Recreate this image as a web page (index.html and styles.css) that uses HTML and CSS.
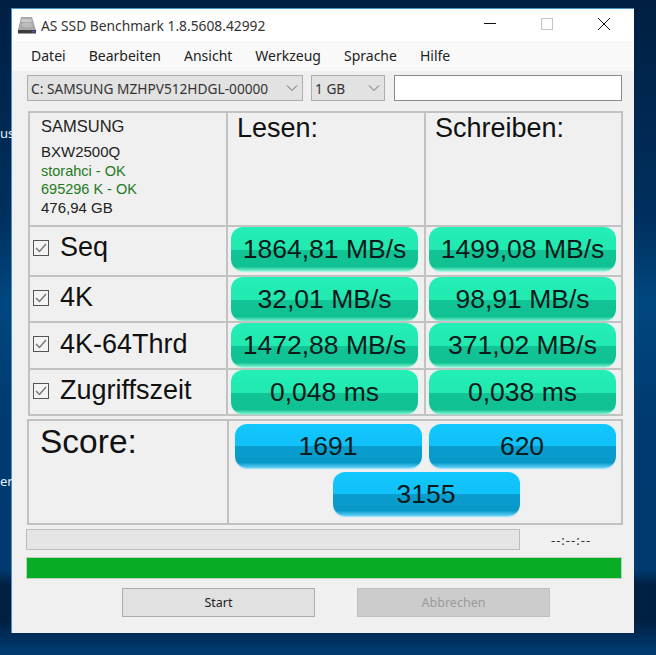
FILE: index.html
```html
<!DOCTYPE html>
<html lang="de">
<head>
  <meta charset="UTF-8">
  <title>AS SSD Benchmark</title>
  <link rel="stylesheet" href="styles.css">
</head>
<body>
  <div class="desktop">
    <span class="desk-label label-top">us</span>
    <span class="desk-label label-bottom">er</span>

    <div class="window">
      <div class="titlebar">
        <svg class="app-icon" width="20" height="18" viewBox="0 0 20 18">
          <path d="M4 1h11l4 13H1z" fill="#a9a9a9"/>
          <path d="M5 3h9l1 3H4z" fill="#c9c9c9"/>
          <ellipse cx="10" cy="9" rx="5" ry="2.5" fill="#bdbdbd"/>
          <rect x="1" y="14" width="18" height="3.5" fill="#3c3c3c"/>
          <rect x="15" y="15" width="3" height="1.5" fill="#5a4fc0"/>
        </svg>
        <span class="app-title">AS SSD Benchmark 1.8.5608.42992</span>
        <div class="win-controls">
          <svg width="14" height="14" viewBox="0 0 14 14"><path d="M1 6.5h12" stroke="#111" stroke-width="1" fill="none"/></svg>
          <svg width="14" height="14" viewBox="0 0 14 14"><rect x="1.5" y="1.5" width="11" height="11" stroke="#c4c4c4" fill="none"/></svg>
          <svg width="14" height="14" viewBox="0 0 14 14"><path d="M1 1l12 12M13 1L1 13" stroke="#111" stroke-width="1" fill="none"/></svg>
        </div>
      </div>

      <div class="menubar">
        <span>Datei</span>
        <span>Bearbeiten</span>
        <span>Ansicht</span>
        <span>Werkzeug</span>
        <span>Sprache</span>
        <span>Hilfe</span>
      </div>

      <div class="content">
        <div class="toolbar">
          <div class="combo combo-drive">
            <span>C: SAMSUNG MZHPV512HDGL-00000</span>
            <svg width="12" height="8" viewBox="0 0 12 8"><path d="M1 1.5l5 5 5-5" stroke="#666" fill="none"/></svg>
          </div>
          <div class="combo combo-size">
            <span>1 GB</span>
            <svg width="12" height="8" viewBox="0 0 12 8"><path d="M1 1.5l5 5 5-5" stroke="#666" fill="none"/></svg>
          </div>
          <div class="textbox"></div>
        </div>

        <div class="results">
          <div class="cell info">
            <div class="info-vendor">SAMSUNG</div>
            <div class="info-line info-fw">BXW2500Q</div>
            <div class="info-line ok">storahci - OK</div>
            <div class="info-line ok">695296 K - OK</div>
            <div class="info-line">476,94 GB</div>
          </div>
          <div class="cell heading">Lesen:</div>
          <div class="cell heading">Schreiben:</div>

          <div class="cell test test-seq">
            <svg class="check" width="16" height="16" viewBox="0 0 16 16"><rect x="0.5" y="0.5" width="15" height="15" fill="#f4f4f4" stroke="#555"/><path d="M3 8l3.5 3.5L13 4" stroke="#777" stroke-width="1.5" fill="none"/></svg>
            <span>Seq</span>
          </div>
          <div class="cell value-cell"><div class="pill green">1864,81 MB/s</div></div>
          <div class="cell value-cell"><div class="pill green">1499,08 MB/s</div></div>

          <div class="cell test">
            <svg class="check" width="16" height="16" viewBox="0 0 16 16"><rect x="0.5" y="0.5" width="15" height="15" fill="#f4f4f4" stroke="#555"/><path d="M3 8l3.5 3.5L13 4" stroke="#777" stroke-width="1.5" fill="none"/></svg>
            <span>4K</span>
          </div>
          <div class="cell value-cell"><div class="pill green">32,01 MB/s</div></div>
          <div class="cell value-cell"><div class="pill green">98,91 MB/s</div></div>

          <div class="cell test">
            <svg class="check" width="16" height="16" viewBox="0 0 16 16"><rect x="0.5" y="0.5" width="15" height="15" fill="#f4f4f4" stroke="#555"/><path d="M3 8l3.5 3.5L13 4" stroke="#777" stroke-width="1.5" fill="none"/></svg>
            <span>4K-64Thrd</span>
          </div>
          <div class="cell value-cell"><div class="pill green">1472,88 MB/s</div></div>
          <div class="cell value-cell"><div class="pill green">371,02 MB/s</div></div>

          <div class="cell test">
            <svg class="check" width="16" height="16" viewBox="0 0 16 16"><rect x="0.5" y="0.5" width="15" height="15" fill="#f4f4f4" stroke="#555"/><path d="M3 8l3.5 3.5L13 4" stroke="#777" stroke-width="1.5" fill="none"/></svg>
            <span>Zugriffszeit</span>
          </div>
          <div class="cell value-cell"><div class="pill green">0,048 ms</div></div>
          <div class="cell value-cell"><div class="pill green">0,038 ms</div></div>
        </div>

        <div class="score">
          <div class="score-label">Score:</div>
          <div class="score-values">
            <div class="pill blue">1691</div>
            <div class="pill blue">620</div>
            <div class="pill blue pill-total">3155</div>
          </div>
        </div>

        <div class="progress-row">
          <div class="progress-empty"></div>
          <span class="time">--:--:--</span>
        </div>
        <div class="progress-full"></div>

        <div class="actions">
          <div class="btn">Start</div>
          <div class="btn btn-disabled">Abbrechen</div>
        </div>
      </div>
    </div>
  </div>
</body>
</html>
```

FILE: styles.css
```css
* {
  box-sizing: border-box;
}

html,
body {
  margin: 0;
  height: 100%;
}

body {
  overflow: hidden;
  font-family: "Liberation Sans", Arial, sans-serif;
}

.desktop {
  position: relative;
  width: 656px;
  height: 655px;
  padding: 8px 22px 0 11px;
  background:
    linear-gradient(180deg, transparent 0, transparent 570px, rgba(0, 10, 30, 0.55) 585px, rgba(0, 10, 30, 0.55) 620px, transparent 650px),
    linear-gradient(180deg, #001f42 0, #00305f 220px, #00477f 300px, #003a70 420px, #003a6e 100%);
}

.desk-label {
  position: absolute;
  left: 0;
  color: #e8eef4;
  font-size: 13px;
  font-family: "Noto Sans", sans-serif;
}

.label-top {
  top: 124px;
}

.label-bottom {
  top: 472px;
}

.window {
  width: 623px;
  height: 625px;
  background: #f0f0f0;
  border-top: 1px solid #4a90c4;
  border-left: 1px solid #4a90c4;
  display: flex;
  flex-direction: column;
}

/* title bar */
.titlebar {
  height: 32px;
  flex: none;
  background: #fff;
  display: flex;
  align-items: center;
  padding-left: 5px;
  color: #333;
}

.app-icon {
  flex: none;
}

.app-title {
  margin-left: 4px;
  font-family: "Noto Sans", sans-serif;
  font-size: 13.8px;
}

.win-controls {
  margin-left: auto;
  display: flex;
  gap: 43px;
  padding-right: 23px;
  margin-top: -2px;
}

/* menu */
.menubar {
  height: 30px;
  flex: none;
  background: #f9f9f9;
  display: flex;
  align-items: center;
  gap: 23px;
  padding: 0 0 2px 19px;
  font-family: "Noto Sans", sans-serif;
  font-size: 14px;
  color: #222;
}

.content {
  padding: 4px 11px 0 14px;
  flex: 1;
}

.toolbar {
  display: flex;
  height: 26px;
  margin-left: 1px;
}

.combo {
  display: flex;
  align-items: center;
  justify-content: space-between;
  background: #e2e2e2;
  border: 1px solid #adadad;
  padding: 0 4px 0 3px;
  font-family: "Noto Sans", sans-serif;
  font-size: 13.7px;
  color: #333;
}

.combo-drive {
  width: 276px;
  margin-right: 8px;
}

.combo-size {
  width: 74px;
  margin-right: 9px;
}

.textbox {
  width: 228px;
  background: #fff;
  border: 1px solid #8a8a8a;
}

/* result table */
.results {
  margin: 10px 0 0 2px;
  display: grid;
  grid-template-columns: 198px 198px 198px;
  grid-template-rows: 114px 50px 46px 47px 46px;
  border-right: 2px solid #c2c2c2;
  border-bottom: 2px solid #c2c2c2;
  width: 595px;
}

.cell {
  border-top: 2px solid #c2c2c2;
  border-left: 2px solid #c2c2c2;
}

.info {
  padding: 2px 0 0 11px;
  color: #222;
  font-size: 15px;
}

.info-vendor {
  font-size: 16.5px;
  line-height: 22px;
}

.info-fw {
  margin-top: 6px;
}

.info-line {
  line-height: 18.7px;
}

.ok {
  color: #1f7a1f;
  font-size: 14.5px;
}

.heading {
  padding: 0 0 0 9px;
  font-size: 27px;
  line-height: 30px;
  color: #111;
}

.test {
  display: flex;
  align-items: center;
  padding: 0 0 3px 3px;
  font-size: 27px;
  color: #111;
}

.test-seq {
  padding-bottom: 7px;
}

.check {
  flex: none;
  margin-right: 11px;
}

.value-cell {
  padding: 0 5px 0 3px;
}

.pill {
  height: 44px;
  width: 187px;
  border-radius: 12px;
  display: flex;
  align-items: center;
  justify-content: center;
  font-size: 26.5px;
  color: #0a1a1a;
  flex: none;
}

.green {
  background: linear-gradient(180deg, #22efb6 0, #22e9b0 52%, #12c596 52%, #10c192 90%, #7df3d2 100%);
  box-shadow: 0 1px 1px rgba(125, 243, 210, 0.6);
}

.blue {
  background: linear-gradient(180deg, #10c8ff 0, #12c0f8 50%, #089ecf 50%, #0898c8 88%, #62d4fa 100%);
  box-shadow: 0 1px 1px rgba(98, 212, 250, 0.6);
}

.pill-total {
  margin-left: 2px;
}

/* score box */
.score {
  margin: 3px 0 0 1px;
  display: grid;
  grid-template-columns: 200px 1fr;
  width: 596px;
  height: 106px;
  border: 2px solid #c2c2c2;
}

.score-label {
  padding: 2px 0 0 11px;
  font-size: 33.5px;
  line-height: 38px;
  color: #111;
  border-right: 2px solid #c2c2c2;
}

.score-values {
  display: flex;
  flex-wrap: wrap;
  justify-content: center;
  align-content: flex-start;
  gap: 4px 7px;
  padding: 3px 4px 0 4px;
}

/* bottom bars */
.progress-row {
  display: flex;
  align-items: center;
  margin-top: 4px;
}

.progress-empty {
  width: 494px;
  height: 21px;
  background: #e5e5e5;
  border: 1px solid #bcbcbc;
}

.time {
  margin-left: 31px;
  font-family: "Noto Sans", sans-serif;
  font-size: 13px;
  letter-spacing: 1px;
  color: #333;
}

.progress-full {
  margin-top: 7px;
  width: 596px;
  height: 22px;
  background: #08ad26;
  border: 1px solid #bcd0bc;
}

.actions {
  display: flex;
  gap: 42px;
  margin: 9px 0 0 96px;
}

.btn {
  width: 193px;
  height: 29px;
  background: #e1e1e1;
  border: 1px solid #adadad;
  display: flex;
  align-items: center;
  justify-content: center;
  font-family: "Noto Sans", sans-serif;
  font-size: 12.5px;
  color: #222;
}

.btn-disabled {
  background: #cccccc;
  border-color: #bfbfbf;
  color: #9a9a9a;
}
```
